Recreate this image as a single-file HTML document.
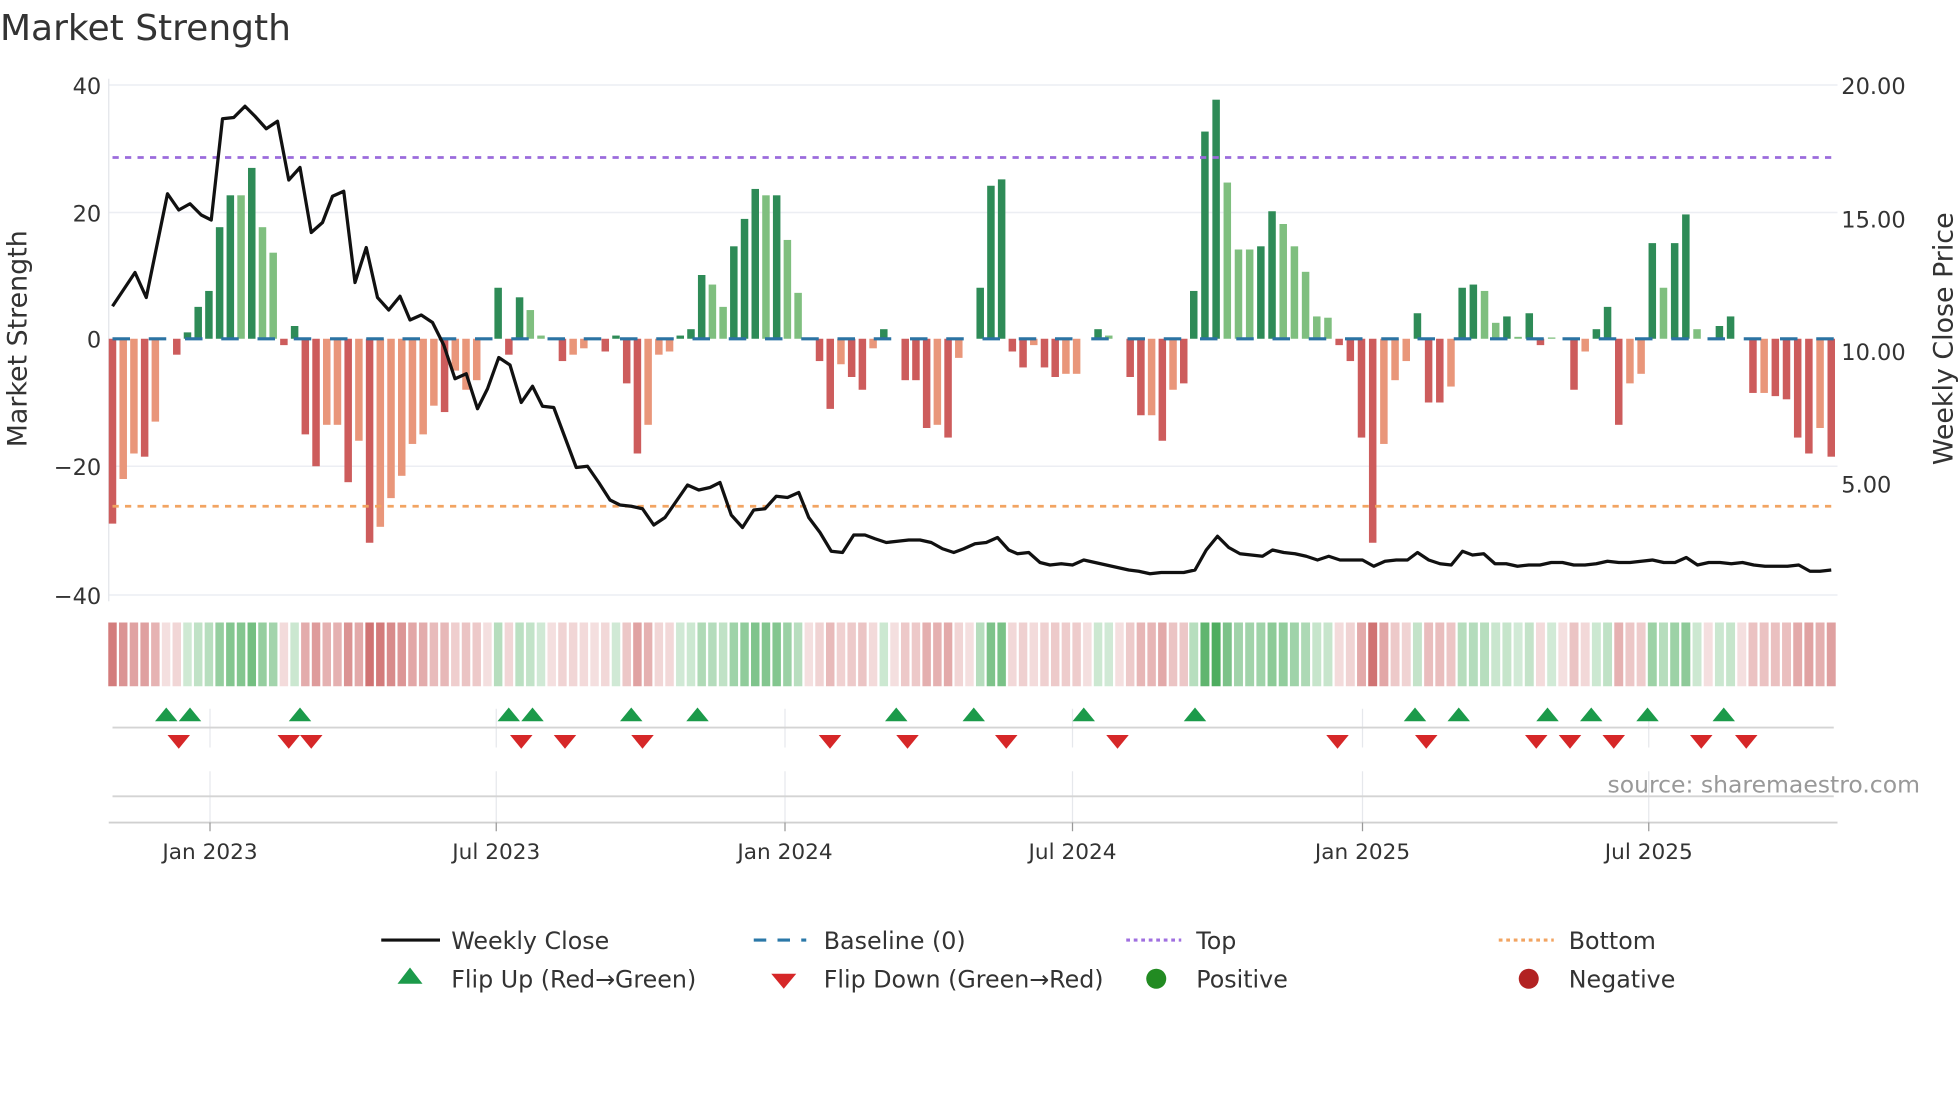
<!DOCTYPE html>
<html><head><meta charset="utf-8"><style>
html,body{margin:0;padding:0;background:#fff;width:1960px;height:1102px;overflow:hidden}
svg{display:block}
text{font-family:"DejaVu Sans","Liberation Sans",sans-serif;fill:#333}
</style></head><body>
<svg id="s" width="1960" height="1102" viewBox="0 0 1568 881.6" xmlns="http://www.w3.org/2000/svg">
<text x="0" y="32" font-size="28.8">Market Strength</text>
<g stroke="#eceef3" stroke-width="1.2">
<line x1="87" y1="68" x2="1470" y2="68"/><line x1="87" y1="170" x2="1470" y2="170"/>
<line x1="87" y1="373" x2="1470" y2="373"/><line x1="87" y1="476" x2="1470" y2="476"/>
</g>
<line x1="87" y1="63" x2="87" y2="481" stroke="#e2e4ea" stroke-width="1"/>
<g font-size="18" text-anchor="end">
<text x="81" y="75">40</text><text x="81" y="177">20</text><text x="81" y="278">0</text>
<text x="81" y="380">−20</text><text x="81" y="483">−40</text>
</g>
<g font-size="18">
<text x="1473" y="75">20.00</text><text x="1473" y="182">15.00</text><text x="1473" y="288">10.00</text><text x="1473" y="394">5.00</text>
</g>
<text transform="translate(21,271) rotate(-90)" font-size="21.5" text-anchor="middle">Market Strength</text>
<text transform="translate(1562,271) rotate(-90)" font-size="21.5" text-anchor="middle">Weekly Close Price</text>
<g id="bars"></g>
<line x1="90" y1="126" x2="1470" y2="126" stroke="#9b6bdc" stroke-width="2.2" stroke-dasharray="5,5"/>
<line x1="90" y1="405" x2="1470" y2="405" stroke="#f2a462" stroke-width="2.2" stroke-dasharray="5,5"/>
<g id="heat"></g>
<g stroke="#e6e8ec" stroke-width="1">
<line x1="168" y1="567" x2="168" y2="598"/><line x1="397" y1="567" x2="397" y2="598"/><line x1="628" y1="567" x2="628" y2="598"/><line x1="858" y1="567" x2="858" y2="598"/><line x1="1090" y1="567" x2="1090" y2="598"/><line x1="1319" y1="567" x2="1319" y2="598"/>
<line x1="168" y1="617" x2="168" y2="658"/><line x1="397" y1="617" x2="397" y2="658"/><line x1="628" y1="617" x2="628" y2="658"/><line x1="858" y1="617" x2="858" y2="658"/><line x1="1090" y1="617" x2="1090" y2="658"/><line x1="1319" y1="617" x2="1319" y2="658"/>
</g>
<line x1="90" y1="582" x2="1467" y2="582" stroke="#d4d4d4" stroke-width="1.5"/>
<line x1="90" y1="637" x2="1467" y2="637" stroke="#d4d4d4" stroke-width="1.5"/>
<line x1="87" y1="658" x2="1470" y2="658" stroke="#d0d0d0" stroke-width="1.5"/>
<g stroke="#999" stroke-width="1"><line x1="168" y1="658" x2="168" y2="665"/><line x1="397" y1="658" x2="397" y2="665"/><line x1="628" y1="658" x2="628" y2="665"/><line x1="858" y1="658" x2="858" y2="665"/><line x1="1090" y1="658" x2="1090" y2="665"/><line x1="1319" y1="658" x2="1319" y2="665"/></g>
<g id="flips"></g>
<text x="1536" y="634" font-size="18.8" text-anchor="end" style="fill:#999">source: sharemaestro.com</text>
<g font-size="17.3" text-anchor="middle">
<text x="168" y="687">Jan 2023</text><text x="397" y="687">Jul 2023</text><text x="628" y="687">Jan 2024</text><text x="858" y="687">Jul 2024</text><text x="1090" y="687">Jan 2025</text><text x="1319" y="687">Jul 2025</text>
</g>
<g font-size="19">
<line x1="305" y1="752" x2="352" y2="752" stroke="#111" stroke-width="2.5"/><text x="361" y="759">Weekly Close</text>
<line x1="603" y1="752" x2="645" y2="752" stroke="#2b78a8" stroke-width="2.5" stroke-dasharray="10,9"/><text x="659" y="759">Baseline (0)</text>
<line x1="901" y1="752" x2="945" y2="752" stroke="#a070e0" stroke-width="2.5" stroke-dasharray="3,3"/><text x="957" y="759">Top</text>
<line x1="1199" y1="752" x2="1243" y2="752" stroke="#f2a462" stroke-width="2.5" stroke-dasharray="3,3"/><text x="1255" y="759">Bottom</text>
<polygon points="328,774 338,787 318,787" fill="#1b9a4a"/><text x="361" y="790">Flip Up (Red→Green)</text>
<polygon points="617,779 637,779 627,791" fill="#d62728"/><text x="659" y="790">Flip Down (Green→Red)</text>
<circle cx="925" cy="783" r="8" fill="#228b22"/><text x="957" y="790">Positive</text>
<circle cx="1223" cy="783" r="8" fill="#b22222"/><text x="1255" y="790">Negative</text>
</g>
<polyline id="price" fill="none" stroke="#111" stroke-width="2.6" stroke-linejoin="round"/>
</svg>
<script>
var NS="http://www.w3.org/2000/svg";
function el(t,a,p){var e=document.createElementNS(NS,t);for(var k in a)e.setAttribute(k,a[k]);p.appendChild(e);return e;}
var A="-29D -22L -18L -18.5D -13L 0 -2.5D 1D 5D 7.5D 17.5D 22.5D 22.5L 26.8D 17.5L 13.5L -1D 2D -15D -20D -13.5L -13.5L -22.5D -16L -32D -29.5L -25L -21.5L -16.5L -15L -10.5L -11.5D -5L -8L -6.5L 0 8D -2.5D 6.5D 4.5L 0.5L 0 -3.5D -2.5L -1.5L 0 -2D 0.5D -7D -18D -13.5L -2.5L -2L 0.5D 1.5D 10D 8.5L 5L 14.5D 18.8D 23.5D 22.5L 22.5D 15.5L 7.2L 0 -3.5D -11D -4L -6D -8D -1.5L 1.5D 0 -6.5D -6.5D -14D -13.5L -15.5D -3L 0 8D 24D 25D -2D -4.5D -1L -4.5D -6D -5.5L -5.5L 0 1.5D 0.5L 0 -6D -12D -12L -16D -8L -7D".split(" ");
var B="7.5D 32.5D 37.5D 24.5L 14L 14L 14.5D 20D 18L 14.5L 10.5L 3.5L 3.3L -1D -3.5D -15.5D -32D -16.5L -6.5L -3.5L 4D -10D -10D -7.5L 8D 8.5D 7.5L 2.5L 3.5D 0.3L 4D -1D 0.2L 0 -8D -2L 1.5D 5D -13.5D -7L -5.5L 15D 8L 15D 19.5D 1.5L 0 2D 3.5D 0 -8.5D -8.5L -9D -9.5D -15.5D -18D -14L -18.5D".split(" ");
var bars=[];
A.forEach(function(s,i){bars.push([90+i*(947-90)/(A.length-1),s]);});
B.forEach(function(s,i){bars.push([955+i*(1465-955)/(B.length-1),s]);});
var g=document.getElementById("bars"),h=document.getElementById("heat");
var zero=271,k=5.1,w=6;
bars.forEach(function(b,i){
 var v=parseFloat(b[1]),t=b[1].slice(-1);
 var col=v>0?(t=="L"?"#7fbf7f":"#2e8b57"):(t=="L"?"#e9967a":"#cd5c5c");
 if(Math.abs(v)>0.05){
  var y=v>0?zero-v*k:zero, hh=Math.abs(v)*k;
  el("rect",{x:b[0]-w/2,y:y,width:w,height:hh,fill:col},g);
 }
 var a,c;
 if(v>0){a=0.22+Math.min(v,38)/38*0.65;c="rgba(50,160,70,"+a+")";}
 else{a=0.18+Math.min(-v,32)/32*0.6;c="rgba(195,75,75,"+a+")";}
 var sp=i<A.length?(947-90)/(A.length-1):(1465-955)/(B.length-1);
 el("rect",{x:b[0]-sp/2+0.9,y:498,width:sp-1.8,height:51,fill:c},h);
});
el("line",{x1:90,y1:271,x2:1467,y2:271,stroke:"#2b73a3","stroke-width":2.5,"stroke-dasharray":"14,15"},g);
var P="90,245 108,218 117,238 134,155 143,168 152,163 161,172 169,176 178,95 187,94 196,85 204,93 213,103 222,97 231,144 240,134 249,186 258,178 266,157 275,153 284,226 293,198 302,238 311,248 320,237 328,256 337,252 346,258 355,276 364,303 373,299 382,327 390,311 399,286 408,292 417,322 426,309 434,325 443,326 452,350 461,374 470,373 479,386 488,400 496,404 505,405 514,407 523,420 532,414 541,401 550,388 559,392 568,390 576,386 585,412 594,422 603,408 612,407 621,397 630,398 639,394 647,414 656,426 665,441 674,442 683,428 692,428 700,431 709,434 718,433 727,432 736,432 745,434 754,439 763,442 771,439 780,435 789,434 798,430 807,440 814,443 823,442 832,450 840,452 849,451 858,452 867,448 876,450 885,452 894,454 903,456 911,457 920,459 929,458 938,458 947,458 956,456 965,440 974,429 983,438 992,443 1001,444 1010,445 1018,440 1027,442 1036,443 1045,445 1054,448 1063,445 1072,448 1081,448 1090,448 1099,453 1108,449 1117,448 1126,448 1134,442 1143,448 1152,451 1161,452 1170,441 1178,444 1187,443 1196,451 1205,451 1214,453 1223,452 1232,452 1241,450 1250,450 1259,452 1268,452 1277,451 1286,449 1295,450 1304,450 1313,449 1322,448 1331,450 1340,450 1349,446 1358,452 1367,450 1376,450 1385,451 1394,450 1403,452 1412,453 1421,453 1430,453 1439,452 1448,457 1456,457 1465,456";
document.getElementById("price").setAttribute("points",P);
var f=document.getElementById("flips");
[133,152,240,407,426,505,558,717,779,867,956,1132,1167,1238,1273,1318,1379].forEach(function(x){el("polygon",{points:(x)+",566 "+(x+9)+",577 "+(x-9)+",577",fill:"#1b9a4a"},f);});
[143,231,249,417,452,514,664,726,805,894,1070,1141,1229,1256,1291,1361,1397].forEach(function(x){el("polygon",{points:(x-9)+",588 "+(x+9)+",588 "+x+",599",fill:"#d62728"},f);});
</script>
</body></html>
